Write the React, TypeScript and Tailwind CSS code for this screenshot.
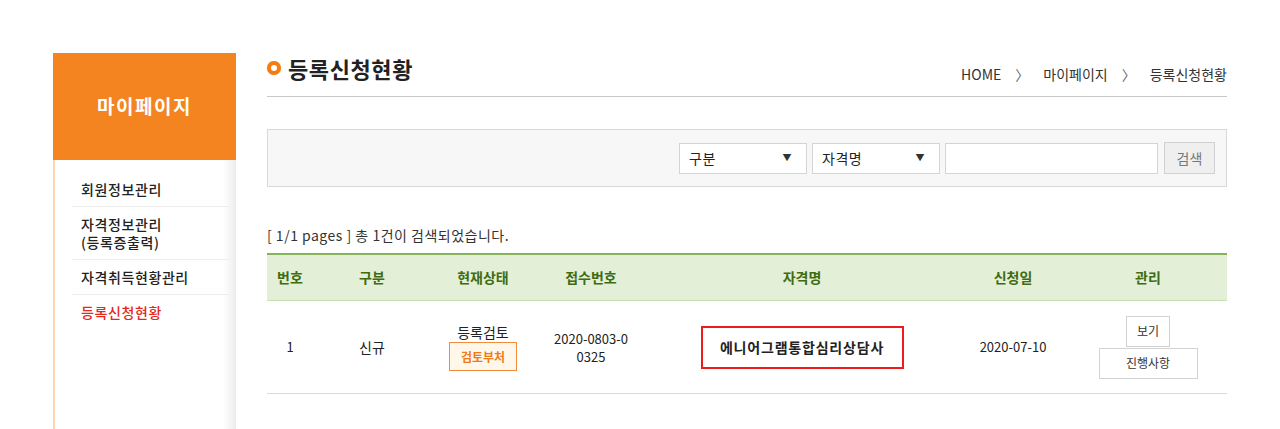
import type { FC, ReactNode } from "react";

const font = { fontFamily: '"Noto Sans CJK KR", "Noto Sans", sans-serif' };

const menu = [
  { label: ["회원정보관리"], active: false },
  { label: ["자격정보관리", "(등록증출력)"], active: false },
  { label: ["자격취득현황관리"], active: false },
  { label: ["등록신청현황"], active: true },
];

const cols = [
  { title: "번호", w: "w-[46px]" },
  { title: "구분", w: "w-[118px]" },
  { title: "현재상태", w: "w-[104px]" },
  { title: "접수번호", w: "w-[112px]" },
  { title: "자격명", w: "w-[310px]" },
  { title: "신청일", w: "w-[112px]" },
  { title: "관리", w: "w-[158px]" },
];

const Sidebar: FC = () => (
  <aside className="w-[183px] h-[380px] shrink-0 flex flex-col border-l-2 border-[#fcd6b2] bg-gradient-to-r from-white from-[93%] to-[#ececec]">
    <div className="h-[107px] -ml-[2px] bg-[#f3841f] flex items-center justify-center">
      <h2 className="text-white text-[19px] font-bold tracking-[1.5px]">마이페이지</h2>
    </div>
    <ul className="pl-[17px] pr-[6px] pt-[12px]">
      {menu.map((m, i) => (
        <li
          key={i}
          className={
            "pl-[9px] py-[8px] text-[14px] leading-[18px] font-medium tracking-[0.6px] " +
            (i < menu.length - 1 ? "border-b border-[#ececec] " : "") +
            (m.active ? "text-[#e3281e]" : "text-[#222]")
          }
        >
          {m.label.map((l) => (
            <div key={l}>{l}</div>
          ))}
        </li>
      ))}
    </ul>
  </aside>
);

const Select: FC<{ label: string }> = ({ label }) => (
  <div className="w-[128px] h-[31px] bg-white border border-[#d4d4d4] flex items-center justify-between pl-[9px] pr-[14px] text-[14px] text-[#222] tracking-[0.5px]">
    <span>{label}</span>
    <span className="text-[9px] text-[#333]">▼</span>
  </div>
);

const Btn: FC<{ children: ReactNode; w: string }> = ({ children, w }) => (
  <div className={"h-[31px] border border-[#d2d2d2] bg-white flex items-center justify-center text-[12px] text-[#333] " + w}>
    {children}
  </div>
);

export default function App() {
  return (
    <div className="bg-white min-h-[429px] overflow-hidden" style={font}>
      <div className="w-[1174px] mx-auto pt-[53px] flex gap-[31px]">
        <Sidebar />
        <main className="flex-1">
          <div className="h-[44px] border-b border-[#c9c9c9] flex justify-between">
            <div className="flex items-center gap-[7px] h-[30px]">
              <span className="w-[14px] h-[14px] rounded-full border-[4px] border-[#f57b12] bg-white shadow-[0_0_1px_#f9b87a]" />
              <h1 className="text-[22px] font-bold text-[#222] leading-none tracking-[0.6px]">등록신청현황</h1>
            </div>
            <div className="flex items-center gap-[14px] text-[14px] text-[#333] h-[42px]">
              <span>HOME</span>
              <span className="text-[#666]">〉</span>
              <span>마이페이지</span>
              <span className="text-[#666]">〉</span>
              <span>등록신청현황</span>
            </div>
          </div>

          <div className="mt-[32px] h-[58px] border border-[#d9d9d9] bg-[#f7f7f7] flex items-center justify-end gap-[5px] pr-[11px]">
            <Select label="구분" />
            <Select label="자격명" />
            <div className="w-[213px] h-[31px] bg-white border border-[#d4d4d4]" />
            <div className="ml-[1px] w-[51px] h-[32px] bg-[#efefef] border border-[#d0d0d0] flex items-center justify-center text-[14px] text-[#777]">
              검색
            </div>
          </div>

          <p className="mt-[39px] text-[14px] text-[#333] leading-[18px] tracking-[0.5px]">[ 1/1 pages ] 총 1건이 검색되었습니다.</p>

          <div className="mt-[9px] border-t-2 border-[#86b25a]">
            <div className="flex h-[46px] bg-[#e3f0d7] border-b border-[#c7e0b2]">
              {cols.map((c) => (
                <div key={c.title} className={"flex items-center justify-center text-[14px] font-bold text-[#3e6c13] " + c.w}>
                  {c.title}
                </div>
              ))}
            </div>
            <div className="flex h-[93px] border-b border-[#cfe3bd] text-[13px] text-[#222]">
              <div className="w-[46px] flex items-center justify-center">1</div>
              <div className="w-[118px] flex items-center justify-center text-[14px]">신규</div>
              <div className="w-[104px] flex flex-col items-center justify-center">
                <span className="text-[14px] leading-[18px]">등록검토</span>
                <span className="mt-[1px] w-[68px] h-[29px] border border-[#f08c3c] bg-[#fff8ea] flex items-center justify-center text-[12px] font-bold text-[#f07a18]">
                  검토부처
                </span>
              </div>
              <div className="w-[112px] flex items-center justify-center text-center leading-[18px] pt-[1px]">
                2020-0803-0
                <br />
                0325
              </div>
              <div className="w-[310px] flex items-center justify-center">
                <div className="w-[203px] h-[43px] border-2 border-[#ee1c1c] flex items-center justify-center text-[14px] font-bold text-[#222] tracking-[0.8px]">
                  에니어그램통합심리상담사
                </div>
              </div>
              <div className="w-[112px] flex items-center justify-center">2020-07-10</div>
              <div className="w-[158px] flex flex-col items-center justify-center gap-[1px]">
                <Btn w="w-[44px]">보기</Btn>
                <Btn w="w-[99px]">진행사항</Btn>
              </div>
            </div>
          </div>
        </main>
      </div>
    </div>
  );
}
